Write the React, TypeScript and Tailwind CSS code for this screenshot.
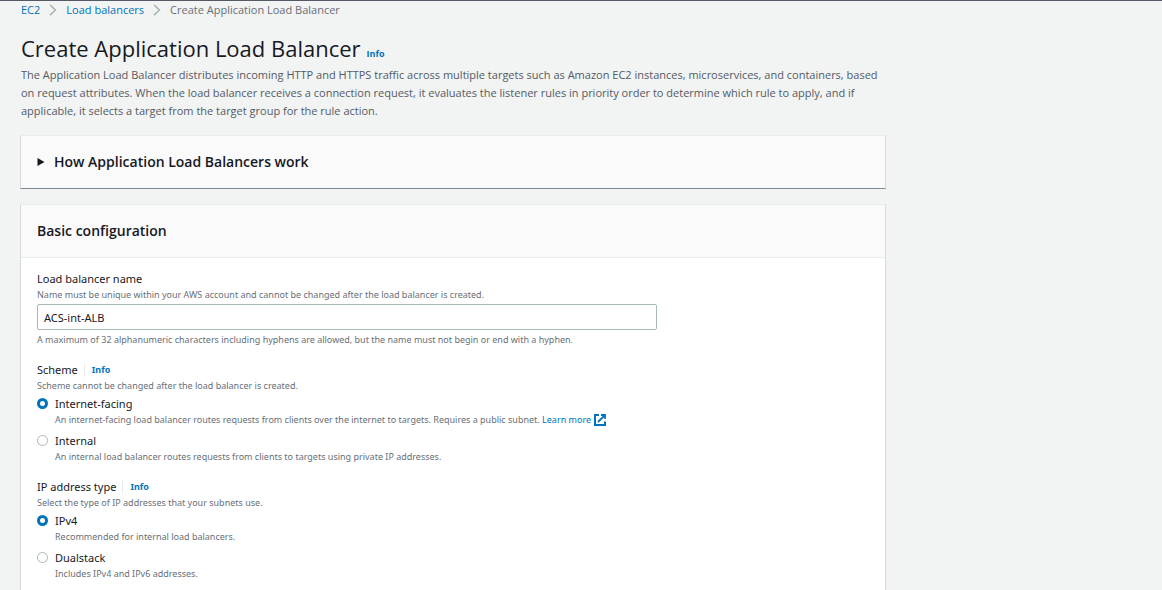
import { useState, type ReactNode } from "react";

function Chevron() {
  return (
    <svg aria-hidden="true" viewBox="0 0 8 12" className="h-3 w-2 shrink-0" fill="none" stroke="#aab7b8" strokeWidth="1.6">
      <path d="M1 0.8 6.4 6 1 11.2" />
    </svg>
  );
}

function ExternalIcon() {
  return (
    <svg aria-hidden="true" viewBox="0 0 12 12" className="h-3 w-3 shrink-0" fill="none" stroke="currentColor" strokeWidth="2">
      <path d="M5 1H1v10h10V7.5" />
      <path d="M7 1h4v4M10.6 1.4 4 8" strokeWidth="1.8" />
    </svg>
  );
}

function InfoLink() {
  return (
    <a href="#info" className="text-[9px] font-bold text-[#0073bb]">
      Info
    </a>
  );
}

function Hint({ children, id }: { children: ReactNode; id?: string }) {
  return (
    <p id={id} className="text-[9px] leading-[14px] text-[#687078]">
      {children}
    </p>
  );
}

type Option = { value: string; label: string; hint: ReactNode };

function RadioField({ name, title, hint, options }: { name: string; title: string; hint: string; options: Option[] }) {
  const [selected, setSelected] = useState(options[0].value);
  return (
    <div role="radiogroup" aria-labelledby={`${name}-title`} className="flex flex-col">
      <div className="flex items-center leading-[18px]">
        <span id={`${name}-title`}>{title}</span>
        <span className="ml-1.5 flex h-3.5 items-center border-l border-[#eaeded] pl-[7px]">
          <InfoLink />
        </span>
      </div>
      <Hint>{hint}</Hint>
      <div className="mt-0.5 flex flex-col gap-[5px]">
        {options.map((option) => (
          <div key={option.value} className="flex items-start gap-[7px]">
            <input
              type="radio"
              id={`${name}-${option.value}`}
              name={name}
              checked={selected === option.value}
              onChange={() => setSelected(option.value)}
              className="mt-[3px] h-[11px] w-[11px] shrink-0 appearance-none rounded-full border border-[#aab7b8] bg-white checked:border-[3px] checked:border-[#0073bb]"
            />
            <div>
              <label htmlFor={`${name}-${option.value}`} className="block leading-[18px]">
                {option.label}
              </label>
              <Hint>{option.hint}</Hint>
            </div>
          </div>
        ))}
      </div>
    </div>
  );
}

const schemeOptions: Option[] = [
  {
    value: "internet-facing",
    label: "Internet-facing",
    hint: (
      <span className="flex items-center gap-[3px]">
        <span>
          An internet-facing load balancer routes requests from clients over the internet to targets. Requires a public subnet.{" "}
          <a href="#learn-more" className="text-[#0073bb]">
            Learn more
          </a>
        </span>
        <span className="text-[#0073bb]">
          <ExternalIcon />
        </span>
      </span>
    ),
  },
  {
    value: "internal",
    label: "Internal",
    hint: "An internal load balancer routes requests from clients to targets using private IP addresses.",
  },
];

const ipOptions: Option[] = [
  { value: "ipv4", label: "IPv4", hint: "Recommended for internal load balancers." },
  { value: "dualstack", label: "Dualstack", hint: "Includes IPv4 and IPv6 addresses." },
];

export default function App() {
  const [name, setName] = useState("ACS-int-ALB");
  const [open, setOpen] = useState(false);
  return (
    <div className="min-h-screen border-t border-[#545b64] bg-[#f2f3f3] font-['Open_Sans',sans-serif] text-[11px] text-[#16191f]">
      <div className="max-w-[886px] pl-5">
        <nav aria-label="Breadcrumb" className="flex items-center gap-[9px] pl-px leading-[18px]">
          <a href="#ec2" className="text-[#0073bb]">EC2</a>
          <Chevron />
          <a href="#load-balancers" className="text-[#0073bb]">Load balancers</a>
          <Chevron />
          <span className="text-[#687078]">Create Application Load Balancer</span>
        </nav>

        <header className="mt-3.5 pr-2 pl-px">
          <div className="flex items-baseline gap-1.5">
            <h1 className="text-[22px] leading-[30px]">Create Application Load Balancer</h1>
            <InfoLink />
          </div>
          <p className="mt-[3px] leading-[18px] text-[#545b64]">
            The Application Load Balancer distributes incoming HTTP and HTTPS traffic across multiple targets such as Amazon EC2 instances, microservices, and containers, based on request attributes. When the load balancer receives a connection request, it evaluates the listener rules in priority order to determine which rule to apply, and if applicable, it selects a target from the target group for the rule action.
          </p>
        </header>

        <main className="mt-[15px] flex flex-col gap-[15px]">
          <section className="border border-[#d5dbdb] border-t-[#eaeded] border-b-[#7b8c96] bg-[#fafafa]">
            <h2>
              <button
                type="button"
                aria-expanded={open}
                onClick={() => setOpen(!open)}
                className="flex w-full items-center gap-[9px] px-4 py-4 text-left text-[14px] leading-5 font-semibold"
              >
                <svg aria-hidden="true" viewBox="0 0 8 8" className="h-2 w-2" fill="currentColor">
                  <path d="M0.5 0 7.5 4 0.5 8Z" />
                </svg>
                How Application Load Balancers work
              </button>
            </h2>
          </section>

          <section className="border border-[#d5dbdb] border-t-[#eaeded] bg-white pb-8">
            <h2 className="border-b border-[#eaeded] bg-[#fafafa] px-4 py-4 text-[14px] leading-5 font-semibold">Basic configuration</h2>
            <div className="flex flex-col gap-3.5 px-4 pt-3 font-['Noto_Sans',sans-serif]">
              <div className="flex flex-col">
                <label htmlFor="lb-name" className="block leading-[18px]">Load balancer name</label>
                <Hint>Name must be unique within your AWS account and cannot be changed after the load balancer is created.</Hint>
                <input
                  id="lb-name"
                  type="text"
                  value={name}
                  onChange={(e) => setName(e.target.value)}
                  className="mt-0.5 mb-[3px] h-[26px] w-full max-w-[620px] rounded-[2px] border border-[#aab7b8] bg-white px-1.5"
                />
                <Hint>A maximum of 32 alphanumeric characters including hyphens are allowed, but the name must not begin or end with a hyphen.</Hint>
              </div>
              <RadioField name="scheme" title="Scheme" hint="Scheme cannot be changed after the load balancer is created." options={schemeOptions} />
              <RadioField name="ip-type" title="IP address type" hint="Select the type of IP addresses that your subnets use." options={ipOptions} />
            </div>
          </section>
        </main>
      </div>
    </div>
  );
}
